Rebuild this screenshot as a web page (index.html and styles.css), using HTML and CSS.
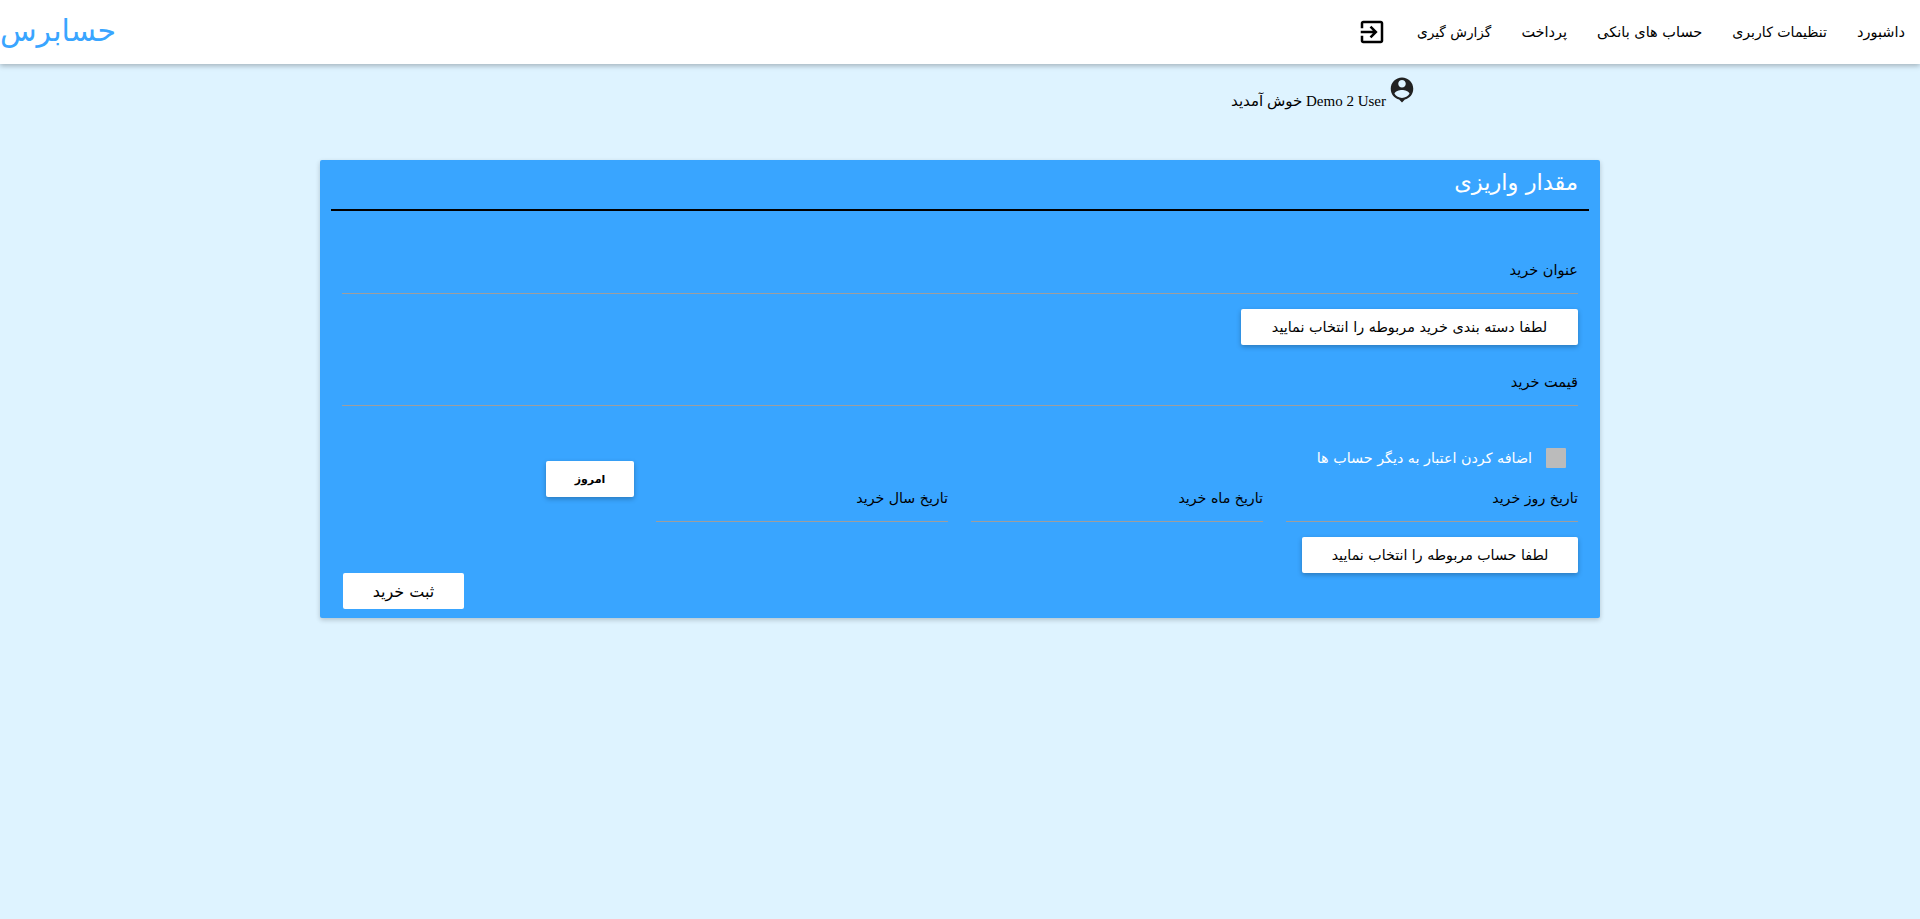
FILE: index.html
```html
<!DOCTYPE html>
<html lang="fa" dir="rtl">
<head>
<meta charset="utf-8">
<title>حسابرس</title>
<link rel="stylesheet" href="styles.css">
</head>
<body>
<header class="topbar">
  <nav class="nav">
    <a class="nav-link">داشبورد</a>
    <a class="nav-link nav-link-settings">تنظیمات کاربری</a>
    <a class="nav-link">حساب های بانکی</a>
    <a class="nav-link">پرداخت</a>
    <a class="nav-link nav-link-compact">گزارش گیری</a>
    <a class="nav-icon"><svg width="30" height="30" viewBox="0 0 24 24"><path d="M10.09 15.59L11.5 17l5-5-5-5-1.41 1.41L12.67 11H3v2h9.67l-2.58 2.59zM19 3H5c-1.11 0-2 .9-2 2v4h2V5h14v14H5v-4H3v4c0 1.1.89 2 2 2h14c1.1 0 2-.9 2-2V5c0-1.1-.9-2-2-2z"/></svg></a>
  </nav>
  <div class="logo">حسابرس</div>
</header>
<div class="welcome">
  <svg class="welcome-icon" width="30" height="30" viewBox="0 0 24 24"><path d="M12 2c-4.97 0-9 4.03-9 9 0 4.17 2.84 7.67 6.69 8.69L12 22l2.31-2.31C18.16 18.67 21 15.17 21 11c0-4.97-4.03-9-9-9zm0 2c1.66 0 3 1.34 3 3s-1.34 3-3 3-3-1.34-3-3 1.34-3 3-3zm0 14.3c-2.5 0-4.71-1.28-6-3.22.03-1.99 4-3.08 6-3.08 1.99 0 5.97 1.09 6 3.08-1.29 1.94-3.5 3.22-6 3.22z"/></svg>
  <span class="welcome-text">Demo 2 User خوش آمدید</span>
</div>
<main class="card">
  <h1 class="card-title">مقدار واریزی</h1>
  <form class="card-body">
    <div class="field field-first">عنوان خرید</div>
    <div class="btn btn-category">لطفا دسته بندی خرید مربوطه را انتخاب نمایید</div>
    <div class="field field-price">قیمت خرید</div>
    <div class="date-block">
      <div class="date-main">
        <label class="check-row"><span class="checkbox"></span><span class="check-label">اضافه کردن اعتبار به دیگر حساب ها</span></label>
        <div class="date-grid">
          <div class="field field-date">تاریخ روز خرید</div>
          <div class="field field-date">تاریخ ماه خرید</div>
          <div class="field field-date">تاریخ سال خرید</div>
        </div>
      </div>
      <div class="btn btn-today">امروز</div>
    </div>
    <div class="btn btn-account">لطفا حساب مربوطه را انتخاب نمایید</div>
    <div class="submit-row"><div class="btn btn-submit">ثبت خرید</div></div>
  </form>
</main>
</body>
</html>
```
FILE: styles.css
```css
* { box-sizing: border-box; }
html, body { margin: 0; height: 100%; }
body {
  background: #def3ff;
  font-family: "DejaVu Sans", "Liberation Sans", sans-serif;
  color: #000;
  overflow: hidden;
}
.topbar {
  height: 64px;
  background: #fff;
  display: flex;
  justify-content: space-between;
  align-items: center;
  box-shadow: 0 2px 5px rgba(0,0,0,.26);
}
.nav { display: flex; align-items: center; margin-right: 15px; gap: 30px; font-size: 14.5px; }
.nav-link-settings { font-size: 14.1px; }
.nav-link-compact { font-size: 13.7px; }
.nav-icon { display: flex; }
.logo { font-size: 30px; color: #39a5ff; margin-bottom: 4px; }
.welcome {
  display: flex;
  align-items: flex-start;
  margin-top: 11px;
  margin-right: 503px;
  height: 85px;
}
.welcome-icon { fill: #212121; flex: none; }
.welcome-text { font-family: "Liberation Serif", "DejaVu Sans", serif; font-size: 15px; margin-top: 17px; margin-right: 1px; }
.card {
  width: 1280px;
  height: 458px;
  margin: 0 auto;
  padding: 0 11px 9px;
  background: #39a5ff;
  border-radius: 2px;
  box-shadow: 0 2px 5px rgba(0,0,0,.2);
}
.card-title {
  margin: 0;
  height: 51px;
  padding: 9px 11px 0;
  font-size: 22.5px;
  font-weight: 400;
  color: #fff;
  border-bottom: 2px solid #000;
}
.card-body { padding: 0 11px; }
.field {
  height: 48px;
  padding-top: 16px;
  font-size: 14.5px;
  border-bottom: 1px solid #9e9e9e;
}
.field-date { font-size: 14.2px; }
.field-first { margin-top: 35px; }
.field-price { margin-top: 13px; }
.btn {
  height: 36px;
  display: flex;
  align-items: center;
  justify-content: center;
  background: #fff;
  border-radius: 2px;
  font-size: 14.4px;
  box-shadow: 0 2px 5px rgba(0,0,0,.26);
}
.btn-category { width: 337px; margin-top: 15px; }
.btn-account { width: 276px; margin-top: 15px; font-size: 14.2px; }
.btn-today { width: 88px; margin-top: 13px; margin-right: 22px; font-size: 11px; font-weight: 700; }
.date-block { display: flex; margin-top: 42px; }
.date-main { width: 922px; }
.check-row { display: flex; align-items: center; height: 20px; margin-bottom: 6px; padding-right: 12px; }
.checkbox { width: 20px; height: 20px; background: #bbb; border-radius: 1px; }
.check-label { margin-right: 14px; color: #fff; font-size: 14.3px; }
.date-grid { display: grid; grid-template-columns: repeat(3, 292px); column-gap: 23px; }
.submit-row { display: flex; justify-content: flex-end; padding-left: 1px; }
.btn-submit { width: 121px; box-shadow: none; font-size: 16px; }
```
